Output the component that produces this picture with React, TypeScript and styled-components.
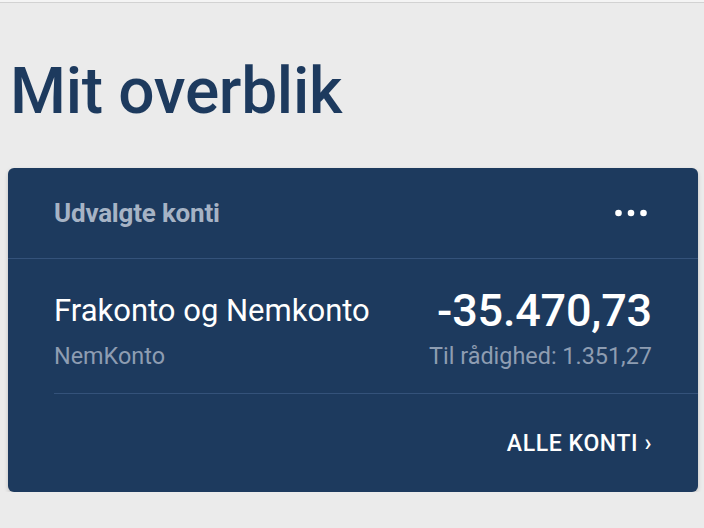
import React from "react";
import styled, { createGlobalStyle } from "styled-components";

const Global = createGlobalStyle`
  html, body { margin: 0; padding: 0; }
  body {
    background: #ebebeb;
    font-family: Roboto, "Liberation Sans", Arial, sans-serif;
    -webkit-font-smoothing: antialiased;
  }
`;

const TopStrip = styled.div`
  height: 2px;
  background: #f4f4f4;
  border-bottom: 1px solid #d2d2d2;
`;

const Page = styled.main`
  display: flex;
  flex-direction: column;
  padding: 50px 6px 0 8px;
`;

const Title = styled.h1`
  margin: 0 0 38px 2px;
  font-size: 64px;
  line-height: 77px;
  font-weight: 500;
  color: #1d3a5e;
  letter-spacing: -0.3px;
`;

const Card = styled.section`
  background: #1d3a5e;
  border-radius: 6px;
  box-shadow: 0 2px 4px rgba(0, 0, 0, 0.18);
  display: flex;
  flex-direction: column;
  color: #fff;
`;

const CardHeader = styled.header`
  height: 90px;
  display: flex;
  align-items: center;
  justify-content: space-between;
  padding: 0 51px 0 46px;
  border-bottom: 1px solid #34527a;
`;

const HeaderTitle = styled.h2`
  margin: 0;
  font-size: 26px;
  font-weight: 700;
  color: #a6b3c5;
  letter-spacing: -0.2px;
`;

const MoreButton = styled.button`
  border: 0;
  background: none;
  padding: 0;
  display: flex;
  cursor: pointer;
`;

const AccountItem = styled.div`
  margin-left: 46px;
  padding: 28px 46px 23px 0;
  border-bottom: 1px solid #34527a;
  display: flex;
  flex-direction: column;
  gap: 7px;
`;

const Line = styled.div`
  display: flex;
  align-items: center;
  justify-content: space-between;
`;

const AccountName = styled.span`
  font-size: 31px;
  line-height: 48px;
  font-weight: 400;
  color: #ffffff;
`;

const Amount = styled.span`
  font-size: 45px;
  line-height: 48px;
  font-weight: 500;
  color: #ffffff;
  letter-spacing: -0.2px;
`;

const SubText = styled.span`
  font-size: 23.4px;
  line-height: 28px;
  color: #8e9db2;
`;

const CardFooter = styled.footer`
  height: 98px;
  display: flex;
  align-items: center;
  justify-content: flex-end;
  padding: 0 46px;
`;

const LinkButton = styled.a`
  font-size: 23px;
  font-weight: 500;
  letter-spacing: 0.6px;
  color: #ffffff;
  text-decoration: none;
`;

const Dots = () => (
  <svg width="32" height="8" viewBox="0 0 32 8" aria-hidden="true">
    <circle cx="3.5" cy="4" r="3.3" fill="#fff" />
    <circle cx="16" cy="4" r="3.3" fill="#fff" />
    <circle cx="28.5" cy="4" r="3.3" fill="#fff" />
  </svg>
);

export default function App() {
  return (
    <>
      <Global />
      <TopStrip />
      <Page>
        <Title>Mit overblik</Title>
        <Card>
          <CardHeader>
            <HeaderTitle>Udvalgte konti</HeaderTitle>
            <MoreButton aria-label="Flere">
              <Dots />
            </MoreButton>
          </CardHeader>
          <AccountItem>
            <Line>
              <AccountName>Frakonto og Nemkonto</AccountName>
              <Amount>-35.470,73</Amount>
            </Line>
            <Line>
              <SubText>NemKonto</SubText>
              <SubText>Til rådighed: 1.351,27</SubText>
            </Line>
          </AccountItem>
          <CardFooter>
            <LinkButton href="#">ALLE KONTI ›</LinkButton>
          </CardFooter>
        </Card>
      </Page>
    </>
  );
}
